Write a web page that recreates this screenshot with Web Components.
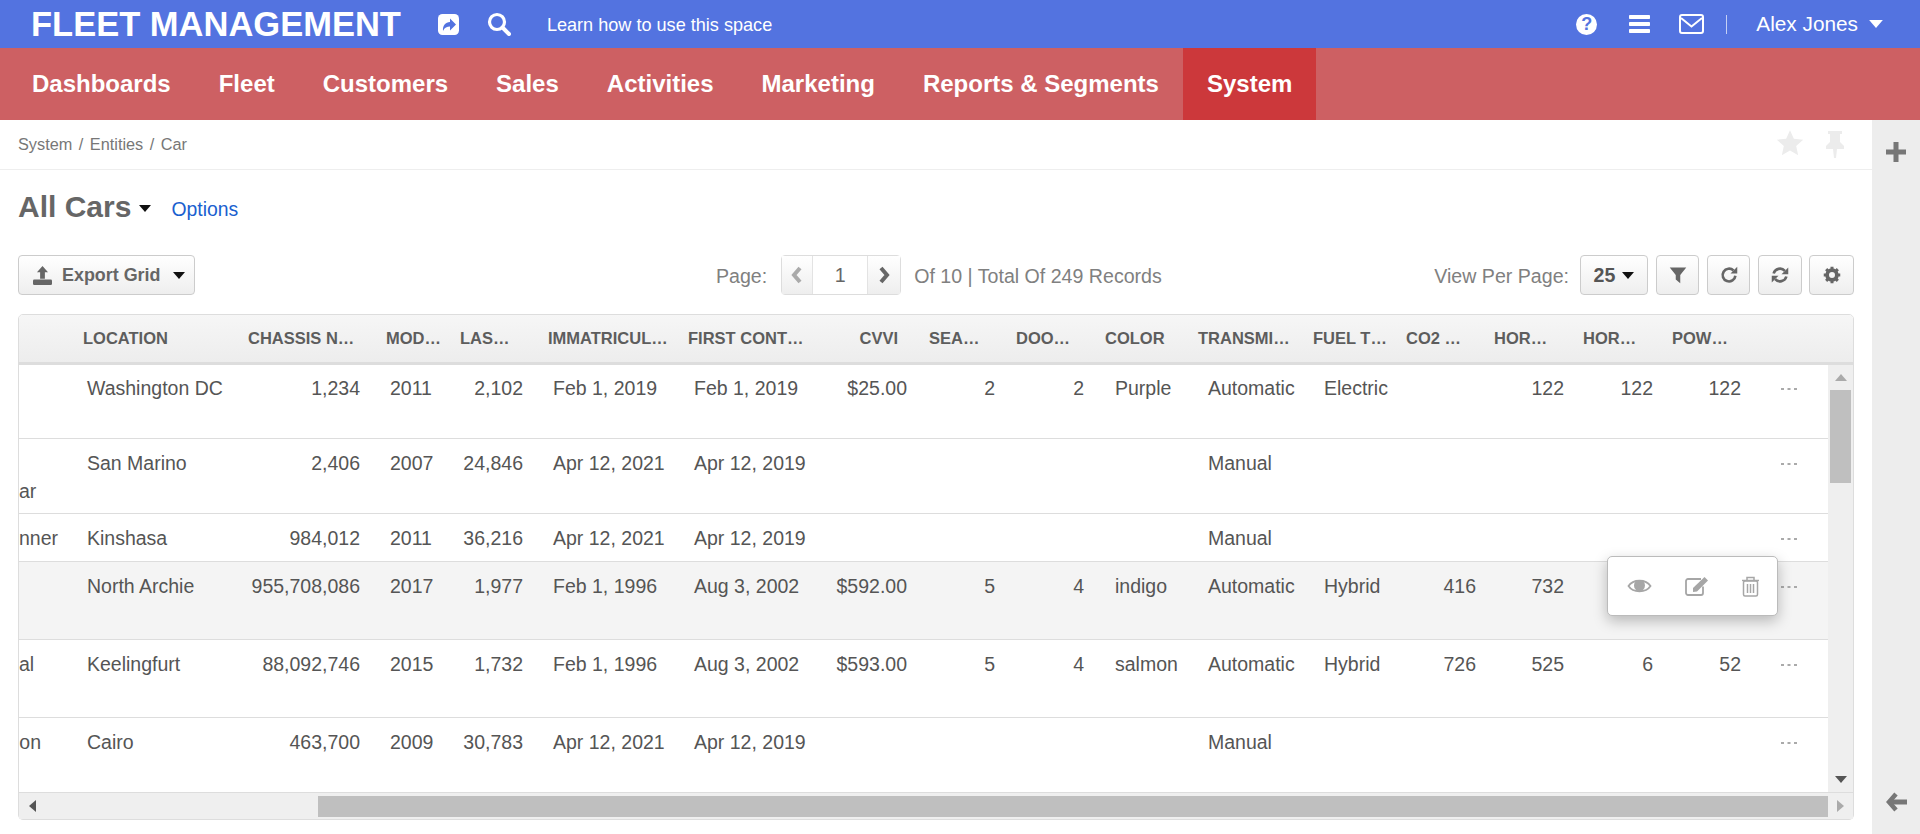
<!DOCTYPE html>
<html><head><meta charset="utf-8"><title>All Cars</title>
<style>
html,body{margin:0;height:834px;overflow:hidden;background:#fff;font-family:"Liberation Sans",Arial,sans-serif}
</style></head><body>
<fleet-app></fleet-app>
<script>
const svg=(w,h,vb,inner,extra='')=>`<svg width="${w}" height="${h}" viewBox="${vb}" ${extra} style="display:block;flex:none">${inner}</svg>`;
const caret=(w,h,c)=>svg(w,h,'0 0 12 7',`<polygon points="0,0 12,0 6,7" fill="${c}"/>`);
function gear(c){let t='';for(let i=0;i<8;i++)t+=`<rect x="10" y="1" width="4" height="5" fill="${c}" transform="rotate(${i*45} 12 12)"/>`;
 return svg(18,18,'0 0 24 24',t+`<circle cx="12" cy="12" r="6.5" fill="none" stroke="${c}" stroke-width="5"/>`);}
function def(name,html,init){customElements.define(name,class extends HTMLElement{constructor(){super();this.attachShadow({mode:'open'}).innerHTML=html;if(init)init(this.shadowRoot,this);}});}

def('top-bar',`<style>
:host{display:flex;align-items:center;height:48px;background:#5373e0;color:#fff;flex:none}
.logo{font-size:34.5px;font-weight:bold;margin-left:31px;white-space:nowrap;line-height:48px}
.share{margin-left:37px}.search{margin-left:28px}
.learn{font-size:18.1px;margin-left:36px;white-space:nowrap;margin-top:2px}
.right{margin-left:auto;display:flex;align-items:center}
.q{width:21px;height:21px;border-radius:50%;background:#fff;color:#5373e0;font-weight:bold;font-size:18px;line-height:21px;text-align:center;margin-right:32px}
.bars{margin-right:29px}.mail{margin-right:22px}
.div{width:1px;height:19px;background:#c5d0f5;margin-right:29px}
.user{font-size:20.8px;white-space:nowrap;margin-right:11px}
.c{margin-right:37px}
</style>
<div class="logo">FLEET MANAGEMENT</div>
<div class="share">${svg(21,21,'0 0 21 21','<rect width="21" height="21" rx="4.5" fill="#fff"/><path d="M5 17c-.5-5.5 2.5-9 7-9V4.500l6 6-6 6v-4c-3 0-5.500 1-7 4.500z" fill="#5373e0"/>')}</div>
<div class="search">${svg(24,24,'0 0 24 24','<circle cx="10" cy="10" r="7.5" fill="none" stroke="#fff" stroke-width="3.2"/><path d="M15.5 15.5L22 22" stroke="#fff" stroke-width="4" stroke-linecap="round"/>')}</div>
<div class="learn">Learn how to use this space</div>
<div class="right">
<div class="q">?</div>
<div class="bars">${svg(21,18,'0 0 21 18','<rect width="21" height="4" rx=".8" fill="#fff"/><rect y="7" width="21" height="4" rx=".8" fill="#fff"/><rect y="14" width="21" height="4" rx=".8" fill="#fff"/>')}</div>
<div class="mail">${svg(25,20,'0 0 25 20','<rect x="1" y="1" width="23" height="18" rx="2" fill="none" stroke="#fff" stroke-width="2"/><path d="M2 4l10.5 8.5L23 4" fill="none" stroke="#fff" stroke-width="2"/>')}</div>
<div class="div"></div>
<div class="user">Alex Jones</div>
<div class="c">${caret(14,8,'#fff')}</div>
</div>`);

def('main-nav',`<style>
:host{display:flex;height:72px;background:#cd6063;padding-left:8px;flex:none}
a{display:flex;align-items:center;padding:0 24px;color:#fff;font-size:24px;font-weight:bold;white-space:nowrap}
a.on{background:#cc383b}
</style>
<a>Dashboards</a><a>Fleet</a><a>Customers</a><a>Sales</a><a>Activities</a><a>Marketing</a><a>Reports &amp; Segments</a><a class="on">System</a>`);

def('crumb-bar',`<style>
:host{display:flex;align-items:center;height:49px;border-bottom:1px solid #eee;padding-left:18px;font-size:16.3px;color:#777;flex:none}
.s{margin:0 6.5px}
.r{margin-left:auto;display:flex;align-items:center;margin-right:27px;margin-top:-4px}
.pin{margin-left:21px;margin-top:3px}
</style>
<span>System</span><span class="s">/</span><span>Entities</span><span class="s">/</span><span>Car</span>
<div class="r">${svg(28,28,'0 0 24 24','<polygon points="12,1 15.3,8.3 23.3,9.2 17.3,14.6 19,22.5 12,18.5 5,22.5 6.7,14.6 .7,9.2 8.7,8.3" fill="#ececec"/>')}
<div class="pin">${svg(20,28,'0 0 20 28','<path d="M3 1h14v3h-2v8l4 4v3h-7l-1 9h-2l-1-9H1v-3l4-4V4H3z" fill="#ececec"/>')}</div></div>`);

def('title-row',`<style>
:host{display:flex;align-items:center;height:85px;padding:0 18px 11px;flex:none;box-sizing:border-box}
.t{font-size:30px;font-weight:bold;color:#666;white-space:nowrap}
.c{margin-left:8px;margin-top:2px}
a{color:#1a5fcf;font-size:19.4px;margin-left:20px;margin-top:5px}
</style>
<span class="t">All Cars</span><span class="c">${caret(12,7,'#111')}</span><a>Options</a>`);

const btnCss=`background:linear-gradient(#fff,#eee);border:1px solid #ccc;border-radius:4px;box-sizing:border-box;height:40px;display:flex;align-items:center;justify-content:center;`;
def('grid-toolbar',`<style>
:host{display:flex;align-items:center;height:40px;padding:0 18px;flex:none;color:#808080;font-size:19.6px}
.b{${btnCss}}
.exp{width:177px;color:#666;font-weight:bold;font-size:17.9px;justify-content:flex-start;padding-left:14px}
.exp .tx{margin-left:10px;white-space:nowrap}.exp .cr{margin-left:13px}
.page,.of,.view{margin-top:2px}
.page{margin-left:521px;white-space:nowrap}
.pg{display:flex;margin-left:14px;border:1px solid #ddd;border-radius:4px;height:40px;box-sizing:border-box;width:120px}
.pg div{display:flex;align-items:center;justify-content:center}
.pv{width:30px;background:linear-gradient(#fff,#eee)}
.nx{width:32px;background:linear-gradient(#fff,#eee)}
.in{flex:1;border-left:1px solid #e3e3e3;border-right:1px solid #e3e3e3;color:#666}
.of{margin-left:13px;white-space:nowrap}
.view{margin-left:auto;white-space:nowrap}
.n{width:68px;margin-left:11px;color:#555;font-weight:bold;font-size:19.6px}
.n .cr{margin-left:7px}
.i{margin-left:8px;width:43px}
.i2{width:44px;margin-left:8px}.i3{width:45px;margin-left:7px}
</style>
<div class="b exp">${svg(19,19,'0 0 24 24','<polygon points="12,0 19,8 15,8 15,16 9,16 9,8 5,8" fill="#666"/><rect x="0" y="17" width="24" height="7" rx="1.5" fill="#666"/>')}<span class="tx">Export Grid</span><span class="cr">${caret(12,7,'#111')}</span></div>
<span class="page">Page:</span>
<div class="pg"><div class="pv">${svg(12,18,'0 0 12 18','<path d="M9 2L3 9l6 7" fill="none" stroke="#aaa" stroke-width="4"/>')}</div><div class="in">1</div><div class="nx">${svg(12,18,'0 0 12 18','<path d="M3 2l6 7-6 7" fill="none" stroke="#666" stroke-width="4"/>')}</div></div>
<span class="of">Of 10 | Total Of 249 Records</span>
<span class="view">View Per Page:</span>
<div class="b n">25<span class="cr">${caret(12,7,'#111')}</span></div>
<div class="b i">${svg(18,18,'0 0 24 24','<polygon points="1,2 23,2 15,12 15,23 9,18 9,12" fill="#666"/>')}</div>
<div class="b i">${svg(18,18,'0 0 24 24','<path d="M18 6A8.5 8.5 0 1 0 20.5 13" fill="none" stroke="#666" stroke-width="3.5"/><polygon points="23,1 23,10 14,10" fill="#666"/>')}</div>
<div class="b i2">${svg(18,18,'0 0 24 24','<path d="M3.5 10A8.8 8.8 0 0 1 18.5 6.5" fill="none" stroke="#666" stroke-width="3.5"/><polygon points="23,2 23,11 14,11" fill="#666"/><path d="M20.5 14A8.8 8.8 0 0 1 5.5 17.5" fill="none" stroke="#666" stroke-width="3.5"/><polygon points="1,22 1,13 10,13" fill="#666"/>')}</div>
<div class="b i3">${gear('#666')}</div>`);

const cols=[
 {w:56},
 {w:165,h:'LOCATION',hl:8,bl:12},
 {w:138,h:'CHASSIS N…',hl:8,br:18},
 {w:74,h:'MOD…',hl:8,bl:12},
 {w:88,h:'LAS…',hl:8,br:17},
 {w:140,h:'IMMATRICUL…',hl:8,bl:13},
 {w:150,h:'FIRST CONT…',hl:8,bl:14},
 {w:91,h:'CVVI',hr:23,br:14},
 {w:87,h:'SEA…',hl:8,br:13},
 {w:89,h:'DOO…',hl:8,br:13},
 {w:93,h:'COLOR',hl:8,bl:18},
 {w:115,h:'TRANSMI…',hl:8,bl:18},
 {w:93,h:'FUEL T…',hl:8,bl:19},
 {w:88,h:'CO2 …',hl:8,br:10},
 {w:89,h:'HOR…',hl:8,br:11},
 {w:89,h:'HOR…',hl:8,br:11},
 {w:88,h:'POW…',hl:8,br:11},
 {w:76}
];
const tpl=cols.map(c=>c.w+'px').join(' ');
const rows=[
 {h:73,t:8.5,v:['','Washington DC','1,234','2011','2,102','Feb 1, 2019','Feb 1, 2019','$25.00','2','2','Purple','Automatic','Electric','','122','122','122']},
 {h:74,t:10,v:['<br>ar','San Marino','2,406','2007','24,846','Apr 12, 2021','Apr 12, 2019','','','','','Manual','','','','','']},
 {h:47,t:10,v:['nner','Kinshasa','984,012','2011','36,216','Apr 12, 2021','Apr 12, 2019','','','','','Manual','','','','','']},
 {h:77,t:10,hi:1,v:['','North Archie','955,708,086','2017','1,977','Feb 1, 1996','Aug 3, 2002','$592.00','5','4','indigo','Automatic','Hybrid','416','732','','']},
 {h:77,t:10,v:['al','Keelingfurt','88,092,746','2015','1,732','Feb 1, 1996','Aug 3, 2002','$593.00','5','4','salmon','Automatic','Hybrid','726','525','6','52']},
 {h:73,t:10,v:['on','Cairo','463,700','2009','30,783','Apr 12, 2021','Apr 12, 2019','','','','','Manual','','','','','']}
];
const firstEnd=[0,42,19,0,46,34]; // per-row padding of clipped column
const dots=svg(16,2,'0 0 16 2','<rect width="3" height="2" fill="#aaa"/><rect x="6.5" width="3" height="2" fill="#aaa"/><rect x="13" width="3" height="2" fill="#aaa"/>');
const headHtml=cols.map(c=>{if(!c.h)return '<div class="hc"></div>';
 const s=c.hr!=null?`justify-content:flex-end;padding-right:${c.hr}px`:`padding-left:${c.hl}px`;
 return `<div class="hc" style="${s}">${c.h}</div>`;}).join('');
const rowHtml=rows.map((r,ri)=>{
 let cells=r.v.map((v,i)=>{
  if(i==0)return `<div class="c first" style="padding-top:${r.t}px;padding-right:${firstEnd[ri]}px">${v}</div>`;
  const c=cols[i];
  const s=c.br!=null?`text-align:right;padding-right:${c.br}px`:`padding-left:${c.bl}px`;
  return `<div class="c" style="padding-top:${r.t}px;${s}">${v}</div>`;}).join('');
 return `<div class="r${r.hi?' hi':''}" style="height:${r.h}px">${cells}<div class="c d" style="padding-top:${r.t+14}px">${dots}</div></div>`;}).join('');

def('data-grid',`<style>
:host{display:flex;flex-direction:column;position:relative;height:506px;margin:19px 18px 0;border:1px solid #ddd;border-radius:5px;box-sizing:border-box;flex:none;overflow:visible}
.head{display:grid;grid-template-columns:${tpl};height:47px;background:linear-gradient(#f6f6f6,#ededed);border-bottom:3px solid #ddd;border-radius:4px 4px 0 0;box-sizing:content-box;flex:none;color:#5d5d5d;font-weight:bold;font-size:16.5px;white-space:nowrap}
.hc{display:flex;align-items:center;overflow:hidden}
.mid{display:flex;height:427px;flex:none}
.rows{width:1809px;flex:none;overflow:hidden;color:#555;font-size:19.5px;line-height:28px}
.r{display:grid;grid-template-columns:${tpl};box-sizing:content-box;border-bottom:1px solid #ddd}
.r:last-child{border-bottom:0}
.r.hi{background:#f4f4f4}
.c{white-space:nowrap;overflow:hidden;box-sizing:border-box}
.first{text-align:right}
.d{padding-left:29px}
.vs{width:25px;flex:none;background:#efefef;display:flex;flex-direction:column;align-items:center}
.vt{width:21px;height:93px;background:#bfbfbf;margin-top:9px}
.up{margin-top:9px}.dn{margin-top:auto;margin-bottom:9px}
.hs{flex:1;display:flex;align-items:center;background:#efefef;border-top:1px solid #ddd}
.hs .la{margin-left:10px}
.ht{width:1510px;height:21px;background:#bfbfbf;margin-left:282px;flex:none}
.hs .ra{margin-left:9px}
.pop{position:absolute;left:1588px;top:241px;width:171px;height:60px;box-sizing:border-box;background:#fff;border:1px solid #bbb;border-radius:5px;box-shadow:0 5px 14px rgba(0,0,0,.25);display:flex;align-items:center}
.e1{margin-left:19px}.e2{margin-left:33px}.e3{margin-left:31px}
</style>
<div class="head">${headHtml}</div>
<div class="mid"><div class="rows">${rowHtml}</div>
<div class="vs"><div class="up">${caret(12,7,'#aaa').replace('points="0,0 12,0 6,7"','points="0,7 12,7 6,0"')}</div><div class="vt"></div><div class="dn">${caret(12,7,'#555')}</div></div></div>
<div class="hs"><span class="la">${svg(7,12,'0 0 7 12','<polygon points="7,0 7,12 0,6" fill="#555"/>')}</span><div class="ht"></div><span class="ra">${svg(7,12,'0 0 7 12','<polygon points="0,0 0,12 7,6" fill="#aaa"/>')}</span></div>
<div class="pop">
<span class="e1">${svg(25,18,'0 0 25 18','<path d="M1.5 9C6 2 19 2 23.5 9 19 16 6 16 1.5 9z" fill="none" stroke="#a6a6a6" stroke-width="1.8"/><circle cx="12.5" cy="8.5" r="5.5" fill="#a6a6a6"/>')}</span>
<span class="e2">${svg(25,20,'0 0 25 20','<path d="M18 10.5V17a2 2 0 0 1-2 2H3a2 2 0 0 1-2-2V5a2 2 0 0 1 2-2h13" fill="none" stroke="#a6a6a6" stroke-width="1.8"/><polygon points="8,12 8,16 12,15.5 23,4.5 19.5,1" fill="#a6a6a6"/>')}</span>
<span class="e3">${svg(19,21,'0 0 19 21','<path d="M1 4.5h17M6 4.5V1.5h7v3" fill="none" stroke="#a6a6a6" stroke-width="1.5"/><rect x="2.5" y="5" width="14" height="15" rx="1.5" fill="none" stroke="#a6a6a6" stroke-width="1.5"/><path d="M6.5 8v9M9.5 8v9M12.5 8v9" stroke="#a6a6a6" stroke-width="1.5"/>')}</span>
</div>`);

def('side-rail',`<style>
:host{display:flex;flex-direction:column;align-items:center;width:48px;background:#ededed;flex:none;height:714px;box-sizing:border-box;padding-top:22px}
.a{margin-top:auto;margin-bottom:22px}
</style>
${svg(20,20,'0 0 20 20','<path d="M7.5 0h5v7.5H20v5h-7.5V20h-5v-7.5H0v-5h7.5z" fill="#777"/>')}
<div class="a">${svg(21,20,'0 0 21 20','<path d="M10 2L3 10l7 8" fill="none" stroke="#777" stroke-width="4.5"/><path d="M4 10h17" stroke="#777" stroke-width="5"/>')}</div>`);

def('fleet-app',`<style>
:host{display:flex;flex-direction:column;height:834px;width:1920px;overflow:hidden}
.body{display:flex;flex:1;min-height:0}
.main{flex:1;display:flex;flex-direction:column;min-width:0}
</style>
<top-bar></top-bar><main-nav></main-nav>
<div class="body"><div class="main"><crumb-bar></crumb-bar><title-row></title-row><grid-toolbar></grid-toolbar><data-grid></data-grid></div><side-rail></side-rail></div>`);
</script>
</body></html>
